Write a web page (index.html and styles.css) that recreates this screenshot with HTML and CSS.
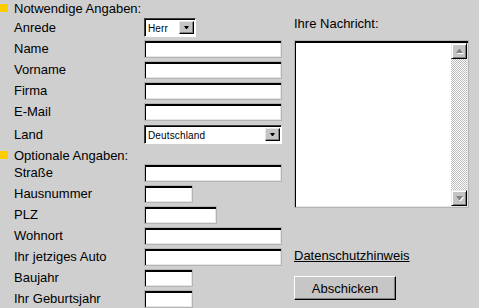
FILE: index.html
```html
<!DOCTYPE html>
<html>
  <head>
    <meta charset='utf-8'>
    <title>Kontakt</title>
    <meta name='viewport' content='width=device-width, initial-scale=1'>
    <link rel="stylesheet" href="styles.css">
  </head>

  <body>
    <form class="page">
      <div class="left">
        <div class="section first"><span class="mark"></span>Notwendige Angaben:</div>
        <div class="row row-select">
          <label>Anrede</label>
          <span class="select select-small">
            <select><option>Herr</option><option>Frau</option></select>
            <span class="arrow"></span>
          </span>
        </div>
        <div class="row"><label>Name</label><input class="w-full"></div>
        <div class="row"><label>Vorname</label><input class="w-full"></div>
        <div class="row"><label>Firma</label><input class="w-full"></div>
        <div class="row"><label>E-Mail</label><input class="w-full"></div>
        <div class="row row-select row-land">
          <label>Land</label>
          <span class="select select-wide">
            <select><option>Deutschland</option><option>Österreich</option><option>Schweiz</option></select>
            <span class="arrow"></span>
          </span>
        </div>
        <div class="section second"><span class="mark"></span>Optionale Angaben:</div>
        <div class="row"><label>Straße</label><input class="w-full"></div>
        <div class="row"><label>Hausnummer</label><input class="w-short"></div>
        <div class="row"><label>PLZ</label><input class="w-mid"></div>
        <div class="row"><label>Wohnort</label><input class="w-full"></div>
        <div class="row"><label>Ihr jetziges Auto</label><input class="w-full"></div>
        <div class="row"><label>Baujahr</label><input class="w-short"></div>
        <div class="row"><label>Ihr Geburtsjahr</label><input class="w-short"></div>
      </div>

      <div class="right">
        <div class="caption">Ihre Nachricht:</div>
        <div class="message">
          <textarea></textarea>
          <div class="scrollbar">
            <span class="sb-btn up"></span>
            <span class="track"></span>
            <span class="sb-btn down"></span>
          </div>
        </div>
        <a class="privacy" href="#">Datenschutzhinweis</a>
        <button type="submit" class="submit">Abschicken</button>
      </div>
    </form>
  </body>
</html>
```

FILE: styles.css
```css
body {
  margin: 0;
  background: #cfcfcf;
  color: #000;
  font-family: "Liberation Sans", Arial, sans-serif;
  font-size: 13px;
}

.page {
  display: flex;
  gap: 12px;
}

.left {
  display: flex;
  flex-direction: column;
  width: 282px;
}

/* section headings with the yellow marker */
.section {
  display: flex;
  align-items: flex-start;
  line-height: 18px;
}

.section.first {
  height: 18px;
}

.section.second {
  height: 17px;
}

.mark {
  width: 8px;
  height: 8px;
  margin: 4px 6px 0 0;
  background: #ffcc00;
}

.row {
  display: flex;
  align-items: center;
  height: 18px;
  margin-bottom: 3px;
}

.row-select {
  height: 19px;
}

.row-land {
  margin-top: 1px;
}

.row label {
  box-sizing: border-box;
  width: 144px;
  padding-left: 14px;
  line-height: 18px;
}

.row input {
  box-sizing: border-box;
  height: 18px;
  margin: 0;
  padding: 2px 3px 0;
  border: 1px solid #b4b4b4;
  box-shadow: inset 1px 2px 0 #000, inset -1px -1px 0 #e6e6e6;
  background: #fff;
  font-family: "Liberation Sans", Arial, sans-serif;
  font-size: 11px;
  outline: none;
}

.w-full {
  width: 138px;
}

.w-mid {
  width: 73px;
}

.w-short {
  width: 49px;
}

/* old style combo box */
.select {
  position: relative;
  box-sizing: border-box;
  height: 19px;
  padding: 1px 0 0 1px;
  border: 1px solid;
  border-color: #404040 #fff #fff #404040;
  box-shadow: inset 1px 1px 0 #000;
  background: #fff;
}

.select-small {
  width: 52px;
}

.select-wide {
  width: 138px;
}

.select select {
  appearance: none;
  width: 100%;
  height: 100%;
  margin: 0;
  padding: 0 0 0 2px;
  border: none;
  background: transparent;
  color: #000;
  font-family: "Liberation Sans", Arial, sans-serif;
  font-size: 10px;
  letter-spacing: 0.15px;
  outline: none;
}

.select .arrow {
  position: absolute;
  top: 2px;
  right: 1px;
  bottom: 2px;
  width: 15px;
  box-sizing: border-box;
  display: flex;
  align-items: center;
  justify-content: center;
  border: 1px solid;
  border-color: #e8e8e8 #000 #000 #e8e8e8;
  box-shadow: inset -1px -1px 0 #808080;
  background: #c4c4c4;
  pointer-events: none;
}

.select .arrow::before {
  content: "";
  width: 1px;
  border-left: 2px solid transparent;
  border-right: 2px solid transparent;
  border-top: 3px solid #000;
}

.right {
  display: flex;
  flex-direction: column;
  align-items: flex-start;
  padding-top: 15px;
}

.caption {
  line-height: 18px;
  margin-bottom: 7px;
}

/* message box with a classic scrollbar */
.message {
  box-sizing: border-box;
  display: flex;
  width: 175px;
  height: 168px;
  margin-bottom: 39px;
  padding: 2px 1px 1px 1px;
  border: 1px solid #b4b4b4;
  box-shadow: inset 1px 2px 0 #000, inset -1px -1px 0 #e6e6e6;
  background: #fff;
}

.message textarea {
  flex: 1;
  margin: 0;
  padding: 2px;
  border: none;
  background: #fff;
  resize: none;
  outline: none;
  font-family: "Liberation Sans", Arial, sans-serif;
  font-size: 12px;
}

.scrollbar {
  display: flex;
  flex-direction: column;
  width: 16px;
}

.track {
  flex: 1;
  background: repeating-conic-gradient(#fff 0 25%, #bcbcbc 0 50%) 0 0 / 2px 2px;
}

.sb-btn {
  box-sizing: border-box;
  display: flex;
  align-items: center;
  justify-content: center;
  height: 16px;
  border: 1px solid;
  border-color: #e8e8e8 #000 #000 #e8e8e8;
  box-shadow: inset 1px 1px 0 #fff, inset -1px -1px 0 #808080;
  background: #c4c4c4;
}

.sb-btn::before {
  content: "";
  width: 1px;
  border-left: 3px solid transparent;
  border-right: 3px solid transparent;
  filter: drop-shadow(1px 1px 0 #fff);
}

.sb-btn.up::before {
  border-bottom: 4px solid #808080;
}

.sb-btn.down::before {
  border-top: 4px solid #808080;
}

.privacy {
  color: #000;
  line-height: 18px;
  margin-bottom: 11px;
}

.submit {
  box-sizing: border-box;
  width: 102px;
  height: 24px;
  margin: 0;
  padding: 0;
  border: 1px solid;
  border-color: #fff #000 #000 #fff;
  box-shadow: inset -1px -1px 0 #808080;
  background: #c6c6c6;
  color: #000;
  font-family: "Liberation Sans", Arial, sans-serif;
  font-size: 13px;
}
```
